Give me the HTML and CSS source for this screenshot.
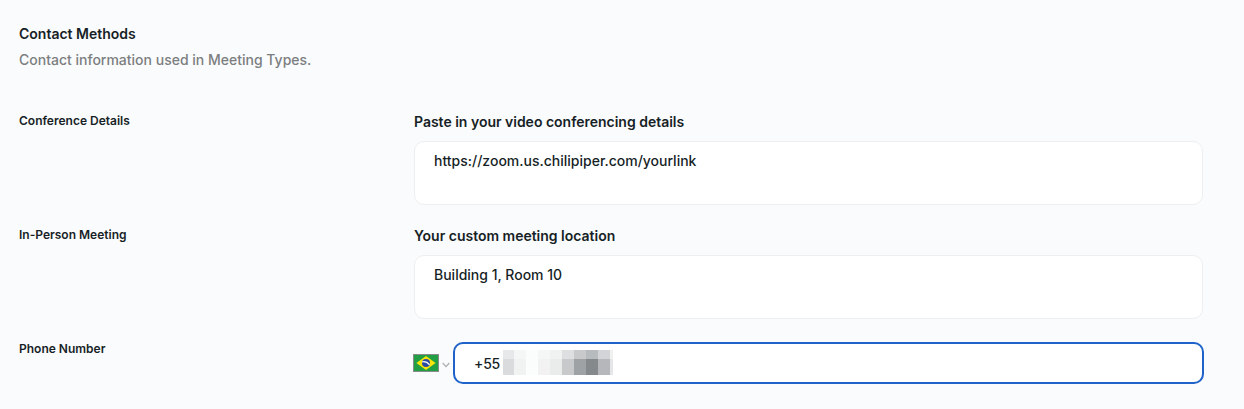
FILE: index.html
```html
<!DOCTYPE html>
<html lang="en">
<head>
<meta charset="utf-8">
<title>Contact Methods</title>
<link rel="stylesheet" href="styles.css">
</head>
<body>
<main class="page">
  <header class="header">
    <h1 class="title">Contact Methods</h1>
    <p class="subtitle">Contact information used in Meeting Types.</p>
  </header>
  <section class="row">
    <h2 class="row-name">Conference Details</h2>
    <div class="field">
      <div class="label">Paste in your video conferencing details</div>
      <div class="box">https://zoom.us.chilipiper.com/yourlink</div>
    </div>
  </section>
  <section class="row">
    <h2 class="row-name">In-Person Meeting</h2>
    <div class="field">
      <div class="label">Your custom meeting location</div>
      <div class="box">Building 1, Room 10</div>
    </div>
  </section>
  <section class="row">
    <h2 class="row-name">Phone Number</h2>
    <div class="phone">
      <svg class="flag" viewBox="0 0 26 18" aria-label="Brazil">
        <rect width="26" height="18" fill="#888c88"/>
        <rect x="1" y="1" width="24" height="16" fill="#229e45"/>
        <path d="M13 1.9 22.6 9 13 16.1 3.4 9Z" fill="#f8e509"/>
        <circle cx="13" cy="9" r="4" fill="#2b49a3"/>
        <path d="M9.2 7.8Q13.8 7.2 16.6 10.8" fill="none" stroke="#f5f8f5" stroke-width="1.3"/>
      </svg>
      <svg class="chevron" viewBox="0 0 8 6"><path d="M.7 1 4 4.7 7.3 1" fill="none" stroke="#aaacae" stroke-width="1.2"/></svg>
      <div class="phone-input">
        <span class="code">+55</span>
        <div class="mosaic">
          <i class="c1"></i><i class="c2"></i><i class="c3"></i><i class="c4"></i><i class="c5"></i><i class="c6"></i><i class="c7"></i><i class="c8"></i><i class="c9"></i><i class="c10"></i>
          <i class="d1"></i><i class="d2"></i><i class="d3"></i><i class="d4"></i><i class="d5"></i><i class="d6"></i><i class="d7"></i><i class="d8"></i><i class="d9"></i><i class="d10"></i>
        </div>
      </div>
    </div>
  </section>
</main>
</body>
</html>
```
FILE: styles.css
```css
* { box-sizing: border-box; }
body {
  margin: 0;
  background: #fafbfd;
  color: #171f26;
  font-family: Inter, "Liberation Sans", sans-serif;
  font-size: 14px;
  line-height: 20px;
}
.page { height: 409px; padding: 24px 40px 0 19px; overflow: hidden; }
.header { height: 88px; }
.title { margin: 0; font-size: 14px; font-weight: 600; }
.subtitle { margin: 6px 0 0; color: #7c7e80; font-weight: 500; }
.row { display: grid; grid-template-columns: 395px 1fr; height: 114px; }
.row-name { margin: 0; font-size: 12px; line-height: 18px; font-weight: 600; }
.field { padding-right: 1px; }
.label { font-weight: 600; margin-bottom: 9px; letter-spacing: -.01px; }
.box {
  height: 64px;
  padding: 9px 19px;
  border: 1px solid #edeff1;
  border-radius: 10px;
  background: #fff;
  font-weight: 500;
}
.phone { display: flex; align-items: center; height: 42px; margin: 2px 0 0 -1px; }
.flag { width: 26px; height: 18px; flex: none; }
.chevron { width: 8px; height: 6px; margin: 4px 3px 0 3px; flex: none; }
.phone-input {
  flex: 1;
  height: 42px;
  display: flex;
  align-items: flex-start;
  padding: 6px 0 0 19px;
  border: 2px solid #1f62c9;
  border-radius: 10px;
  background: #fff;
  font-weight: 500;
}
.code { width: 29px; padding-top: 4px; letter-spacing: -.2px; }
.mosaic {
  display: grid;
  grid-template-columns: 11px repeat(8, 12px) 3px;
  grid-template-rows: 9px 16px;
}
.c1 { background: #e7e8ea; } .d1 { background: #dadbdd; }
.c2 { background: #f5f7f7; } .d2 { background: #f1f2f2; }
.c3 { background: #fafdfc; } .d3 { background: #fafdfc; }
.c4 { background: #f5f7f7; } .d4 { background: #f2f2f2; }
.c5 { background: #f0f2f2; } .d5 { background: #eaecec; }
.c6 { background: #dedfe1; } .d6 { background: #c8c9cb; }
.c7 { background: #c8c9cb; } .d7 { background: #9fa2a5; }
.c8 { background: #b7bbbe; } .d8 { background: #86898c; }
.c9 { background: #d3d4d7; } .d9 { background: #b5b7ba; }
.c10 { background: #f0f0f1; } .d10 { background: #e5e6e7; }
```
